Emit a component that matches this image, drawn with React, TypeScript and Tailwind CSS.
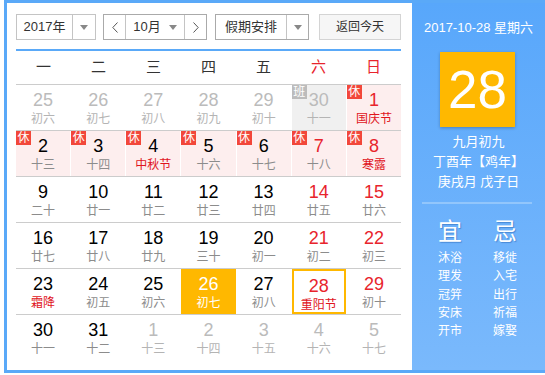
import React from "react";

type Day = {
  n: number;
  l: string;
  dim?: boolean; // other month
  red?: boolean; // weekend number
  fest?: boolean; // red label
  badge?: "休" | "班";
  bg?: "pink" | "grey";
  today?: boolean;
  sel?: boolean;
};

const weeks: Day[][] = [
  [
    { n: 25, l: "初六", dim: true },
    { n: 26, l: "初七", dim: true },
    { n: 27, l: "初八", dim: true },
    { n: 28, l: "初九", dim: true },
    { n: 29, l: "初十", dim: true },
    { n: 30, l: "十一", dim: true, badge: "班", bg: "grey" },
    { n: 1, l: "国庆节", red: true, fest: true, badge: "休", bg: "pink" },
  ],
  [
    { n: 2, l: "十三", badge: "休", bg: "pink" },
    { n: 3, l: "十四", badge: "休", bg: "pink" },
    { n: 4, l: "中秋节", fest: true, badge: "休", bg: "pink" },
    { n: 5, l: "十六", badge: "休", bg: "pink" },
    { n: 6, l: "十七", badge: "休", bg: "pink" },
    { n: 7, l: "十八", red: true, badge: "休", bg: "pink" },
    { n: 8, l: "寒露", red: true, fest: true, badge: "休", bg: "pink" },
  ],
  [
    { n: 9, l: "二十" },
    { n: 10, l: "廿一" },
    { n: 11, l: "廿二" },
    { n: 12, l: "廿三" },
    { n: 13, l: "廿四" },
    { n: 14, l: "廿五", red: true },
    { n: 15, l: "廿六", red: true },
  ],
  [
    { n: 16, l: "廿七" },
    { n: 17, l: "廿八" },
    { n: 18, l: "廿九" },
    { n: 19, l: "三十" },
    { n: 20, l: "初一" },
    { n: 21, l: "初二", red: true },
    { n: 22, l: "初三", red: true },
  ],
  [
    { n: 23, l: "霜降", fest: true },
    { n: 24, l: "初五" },
    { n: 25, l: "初六" },
    { n: 26, l: "初七", today: true },
    { n: 27, l: "初八" },
    { n: 28, l: "重阳节", red: true, fest: true, sel: true },
    { n: 29, l: "初十", red: true },
  ],
  [
    { n: 30, l: "十一" },
    { n: 31, l: "十二" },
    { n: 1, l: "十三", dim: true },
    { n: 2, l: "十四", dim: true },
    { n: 3, l: "十五", dim: true },
    { n: 4, l: "十六", dim: true },
    { n: 5, l: "十七", dim: true },
  ],
];

const yi = ["沐浴", "理发", "冠笄", "安床", "开市"];
const ji = ["移徙", "入宅", "出行", "祈福", "嫁娶"];

const Caret = () => (
  <svg width="8" height="5" viewBox="0 0 8 5">
    <path d="M0 0h8L4 5z" fill="#888" />
  </svg>
);

const Chevron = ({ left }: { left?: boolean }) => (
  <svg width="6" height="11" viewBox="0 0 6 11">
    <path
      d={left ? "M5.5 0.5L0.8 5.5l4.7 5" : "M0.5 0.5l4.7 5-4.7 5"}
      stroke="#555"
      fill="none"
      strokeWidth="1"
    />
  </svg>
);

function Cell({ d }: { d: Day }) {
  let bg = "";
  if (d.bg === "pink") bg = "bg-[#fdeeee]";
  if (d.bg === "grey") bg = "bg-[#f0f0f0]";
  if (d.today) bg = "bg-[#ffb800]";

  let num = "text-black";
  if (d.red) num = "text-[#e8242c]";
  if (d.dim) num = "text-[#bbbbbb]";
  if (d.today) num = "text-white";

  let lunar = "text-[#8c8c8c]";
  if (d.dim) lunar = "text-[#b4b4b4]";
  if (d.fest) lunar = "text-[#e0141c]";
  if (d.today) lunar = "text-white";

  return (
    <div
      className={`relative flex h-[45px] flex-col items-center pt-[4px] ${bg} ${
        d.sel ? "border-2 border-[#ffb800] pt-[2px]" : ""
      }`}
    >
      {d.badge && (
        <span
          className={`absolute left-0 top-0 flex h-[14px] w-[15px] items-center justify-center text-[12px] leading-none text-white ${
            d.badge === "休" ? "bg-[#f2473a]" : "bg-[#bcbcbc]"
          }`}
        >
          {d.badge}
        </span>
      )}
      <span className={`text-[18px] leading-[22px] ${num}`}>{d.n}</span>
      <span className={`text-[12px] leading-[16px] ${lunar}`}>{d.l}</span>
    </div>
  );
}

export default function App() {
  return (
    <div
      className="h-[375px] w-[545px] overflow-hidden bg-white"
      style={{ fontFamily: '"Liberation Sans", Arial, "Noto Sans CJK SC", sans-serif' }}
    >
      <div className="ml-[4px] flex h-[373px] border-[3px] border-r-0 border-[#5aa9f8]">
        {/* calendar side */}
        <div className="w-[405px] pl-[9px] pr-[11px] pt-[11px]">
          <div className="flex h-[26px] text-[#333]">
            <div className="flex w-[80px] border border-[#c4c4c4]">
              <div className="flex w-[55px] items-center justify-center text-[13px]">2017年</div>
              <div className="flex flex-1 items-center justify-center border-l border-[#c4c4c4]">
                <Caret />
              </div>
            </div>
            <div className="ml-[7px] flex w-[104px] border border-[#aaaaaa]">
              <div className="flex w-[22px] items-center justify-center border-r border-[#c4c4c4]">
                <Chevron left />
              </div>
              <div className="flex flex-1 items-center justify-center gap-[8px] text-[13px]">
                <span>10月</span>
                <Caret />
              </div>
              <div className="flex w-[22px] items-center justify-center border-l border-[#c4c4c4]">
                <Chevron />
              </div>
            </div>
            <div className="ml-[8px] flex w-[94px] border border-[#aaaaaa]">
              <div className="flex w-[70px] items-center justify-center text-[13px]">假期安排</div>
              <div className="flex flex-1 items-center justify-center border-l border-[#c4c4c4]">
                <Caret />
              </div>
            </div>
            <div className="ml-[10px] flex w-[82px] items-center justify-center border border-[#d4d4d4] bg-[#f6f6f6] text-[12px]">
              返回今天
            </div>
          </div>

          <div className="mt-[9px] h-[2px] bg-[#5aa9f8]" />

          <div className="grid h-[34px] grid-cols-7 border-b border-[#cccccc] text-[15px]">
            {["一", "二", "三", "四", "五", "六", "日"].map((w, i) => (
              <div
                key={w}
                className={`flex items-center justify-center ${i > 4 ? "text-[#e8242c]" : "text-[#333]"}`}
              >
                {w}
              </div>
            ))}
          </div>

          {weeks.map((row, ri) => (
            <div
              key={ri}
              className={`grid grid-cols-7 gap-x-px ${ri < 5 ? "border-b border-[#cccccc]" : ""}`}
            >
              {row.map((d, ci) => (
                <Cell key={ci} d={d} />
              ))}
            </div>
          ))}
        </div>

        {/* info side */}
        <div className="flex-1 bg-gradient-to-b from-[#58a7fb] to-[#7ab9fc] pt-[15px] text-white">
          <div className="text-center text-[13px] leading-[20px]">2017-10-28 星期六</div>
          <div className="ml-[28px] mt-[14px] flex h-[75px] w-[75px] items-center justify-center bg-[#ffb800] text-[53px] leading-none shadow-[0_1px_3px_rgba(0,0,0,0.25)]">
            28
          </div>
          <div className="mt-[5px] text-center text-[13px] leading-[20px]">
            <div>九月初九</div>
            <div>丁酉年【鸡年】</div>
            <div>庚戌月 戊子日</div>
          </div>
          <div className="ml-[10px] mt-[10px] h-[2px] w-[110px] bg-[#92c6fc]" />
          <div className="mt-[14px] flex gap-[15px] pl-[18px]">
            {[
              { t: "宜", list: yi },
              { t: "忌", list: ji },
            ].map((c) => (
              <div key={c.t} className="w-[40px] text-center">
                <div className="text-[24px] leading-[28px] [text-shadow:1px_1px_1px_rgba(0,60,140,0.35)]">
                  {c.t}
                </div>
                <div className="mt-[3px] text-[12px] leading-[18.3px]">
                  {c.list.map((s) => (
                    <div key={s}>{s}</div>
                  ))}
                </div>
              </div>
            ))}
          </div>
        </div>
      </div>
    </div>
  );
}
